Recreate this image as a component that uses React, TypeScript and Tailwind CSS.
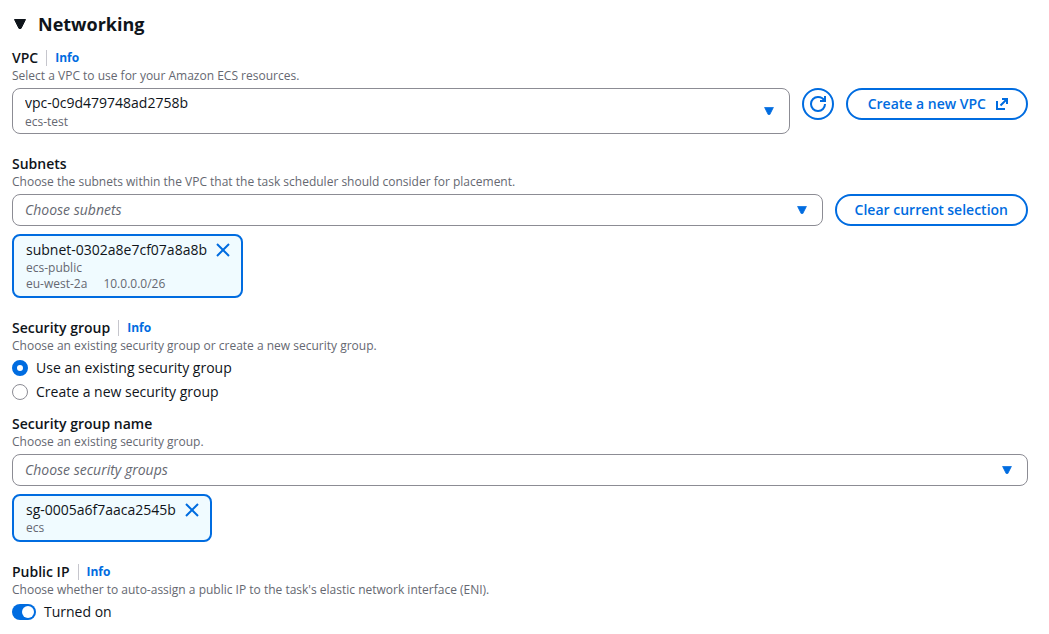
import React, { useState } from "react"

type FieldProps = {
  label: string
  htmlFor?: string
  description: string
  info?: boolean
  className?: string
  children: React.ReactNode
}

type DropdownProps = {
  id: string
  options: string[]
  detail?: string
  placeholder?: boolean
}

type TokenProps = {
  name: string
  details: string[][]
  onDismiss: () => void
}

function Caret({ className }: { className: string }) {
  return (
    <svg
      aria-hidden="true"
      viewBox="0 0 12 10"
      className={className}
      fill="currentColor"
      stroke="currentColor"
      strokeLinejoin="round"
    >
      <path d="M.5.5h11L7 9.500H5z" />
    </svg>
  )
}

function Field({
  label,
  htmlFor,
  description,
  info,
  className = "mt-5",
  children,
}: FieldProps) {
  const title = "text-[14px] leading-5 font-semibold"

  return (
    <div className={className}>
      <div className="flex items-center">
        {htmlFor ? (
          <label htmlFor={htmlFor} className={title}>
            {label}
          </label>
        ) : (
          <span className={title}>{label}</span>
        )}
        {info && (
          <a
            href="#info"
            className="ml-2 border-l border-[#c6c6cd] pl-2 text-[12px] leading-4 font-bold text-[#006ce0]"
          >
            Info
          </a>
        )}
      </div>
      <p className="mb-1 text-[12px] leading-4 text-[#656871]">{description}</p>
      {children}
    </div>
  )
}

function Dropdown({ id, options, detail, placeholder }: DropdownProps) {
  return (
    <div className="relative min-w-0 flex-1">
      <select
        id={id}
        className={`block w-full appearance-none rounded-lg border border-[#8c8c94] bg-white px-3 text-[14px] leading-5 ${
          detail ? "pt-1 pb-5" : "py-[5px]"
        } ${placeholder ? "text-[#656871] italic" : "text-[#0f141a]"}`}
      >
        {options.map((option) => (
          <option key={option}>{option}</option>
        ))}
      </select>
      {detail && (
        <span className="pointer-events-none absolute bottom-1 left-[13px] text-[12px] leading-4 text-[#656871]">
          {detail}
        </span>
      )}
      <span className="pointer-events-none absolute inset-y-0 right-4 flex items-center">
        <Caret className="h-2 w-[10px] text-[#006ce0]" />
      </span>
    </div>
  )
}

function Token({ name, details, onDismiss }: TokenProps) {
  return (
    <div className="mt-2 flex w-fit items-start gap-2 rounded-lg border-2 border-[#006ce0] bg-[#f0fbff] py-1 pr-[10px] pl-3">
      <div>
        <div className="text-[14px] leading-5">{name}</div>
        {details.map((row) => (
          <div
            key={row[0]}
            className="flex gap-4 text-[12px] leading-4 text-[#656871]"
          >
            {row.map((text) => (
              <span key={text}>{text}</span>
            ))}
          </div>
        ))}
      </div>
      <button
        type="button"
        aria-label={`Remove ${name}`}
        onClick={onDismiss}
        className="flex h-5 items-center text-[#006ce0]"
      >
        <svg
          viewBox="0 0 16 16"
          className="size-4"
          fill="none"
          stroke="currentColor"
          strokeWidth="2"
        >
          <path d="m2 2 12 12M14 2 2 14" />
        </svg>
      </button>
    </div>
  )
}

const buttonStyle =
  "flex h-8 shrink-0 items-center justify-center rounded-full border-2 border-[#006ce0] bg-white text-[14px] leading-5 font-semibold text-[#006ce0]"

export default function App(): React.JSX.Element {
  const [expanded, setExpanded] = useState(true)
  const [subnets, setSubnets] = useState(["subnet-0302a8e7cf07a8a8b"])
  const [groups, setGroups] = useState(["sg-0005a6f7aaca2545b"])
  const [mode, setMode] = useState("existing")
  const [publicIp, setPublicIp] = useState(true)

  return (
    <main className="bg-white py-3 pr-[21px] pl-3 font-['Open_Sans','Noto_Sans',sans-serif] text-[#0f141a]">
      <h2 className="text-[18px] leading-6 font-bold">
        <button
          type="button"
          aria-expanded={expanded}
          onClick={() => setExpanded(!expanded)}
          className="flex items-center gap-3 pl-[2px]"
        >
          <Caret
            className={expanded ? "h-[10px] w-3" : "h-[10px] w-3 -rotate-90"}
          />
          Networking
        </button>
      </h2>

      {expanded && (
        <>
          {/* VPC */}
          <Field
            label="VPC"
            htmlFor="vpc"
            info
            description="Select a VPC to use for your Amazon ECS resources."
            className="mt-3"
          >
            <div className="flex items-start gap-3">
              <Dropdown
                id="vpc"
                options={["vpc-0c9d479748ad2758b"]}
                detail="ecs-test"
              />
              <button
                type="button"
                aria-label="Refresh VPCs"
                className={`${buttonStyle} w-8`}
              >
                <svg
                  viewBox="0 0 16 16"
                  className="size-4"
                  fill="none"
                  stroke="currentColor"
                  strokeWidth="2"
                >
                  <path d="M10 5h5V0" />
                  <path d="M15 8a6.900 6.900 0 0 1-7 7 6.900 6.900 0 0 1-7-7 6.900 6.900 0 0 1 7-7c3 0 5.400 1.600 6.500 4" />
                </svg>
              </button>
              <button
                type="button"
                className={`${buttonStyle} gap-2 pr-4 pl-5`}
              >
                Create a new VPC
                <svg
                  aria-hidden="true"
                  viewBox="0 0 16 16"
                  className="size-4"
                  fill="none"
                  stroke="currentColor"
                  strokeWidth="2"
                >
                  <path d="M8 3h5v5M13 3 6.500 9.500M3 5v8h8" />
                </svg>
              </button>
            </div>
          </Field>

          {/* SUBNETS */}
          <Field
            label="Subnets"
            htmlFor="subnets"
            description="Choose the subnets within the VPC that the task scheduler should consider for placement."
          >
            <div className="flex items-start gap-3">
              <Dropdown id="subnets" options={["Choose subnets"]} placeholder />
              <button
                type="button"
                onClick={() => setSubnets([])}
                className={`${buttonStyle} px-[18px]`}
              >
                Clear current selection
              </button>
            </div>
            {subnets.map((name) => (
              <Token
                key={name}
                name={name}
                details={[["ecs-public"], ["eu-west-2a", "10.0.0.0/26"]]}
                onDismiss={() => setSubnets([])}
              />
            ))}
          </Field>

          {/* SECURITY GROUP */}
          <Field
            label="Security group"
            info
            description="Choose an existing security group or create a new security group."
          >
            <div className="flex flex-col gap-1 text-[14px] leading-5">
              {[
                ["existing", "Use an existing security group"],
                ["new", "Create a new security group"],
              ].map(([value, text]) => (
                <label key={value} className="flex items-center gap-2">
                  <input
                    type="radio"
                    name="security-group"
                    value={value}
                    checked={mode === value}
                    onChange={() => setMode(value)}
                    className="size-4 appearance-none rounded-full border border-[#8c8c94] bg-white checked:border-5 checked:border-[#006ce0]"
                  />
                  {text}
                </label>
              ))}
            </div>
          </Field>

          <Field
            label="Security group name"
            htmlFor="groups"
            description="Choose an existing security group."
            className="mt-3"
          >
            <div className="flex">
              <Dropdown
                id="groups"
                options={["Choose security groups"]}
                placeholder
              />
            </div>
            {groups.map((name) => (
              <Token
                key={name}
                name={name}
                details={[["ecs"]]}
                onDismiss={() => setGroups([])}
              />
            ))}
          </Field>

          {/* PUBLIC IP */}
          <Field
            label="Public IP"
            info
            description="Choose whether to auto-assign a public IP to the task's elastic network interface (ENI)."
          >
            <label className="flex w-fit items-center gap-2 text-[14px] leading-5">
              <span className="relative flex">
                <input
                  type="checkbox"
                  role="switch"
                  checked={publicIp}
                  onChange={() => setPublicIp(!publicIp)}
                  className="peer h-4 w-6 appearance-none rounded-full bg-[#8c8c94] checked:bg-[#006ce0]"
                />
                <span className="pointer-events-none absolute top-[2px] left-[2px] size-3 rounded-full bg-white peer-checked:left-[10px]" />
              </span>
              {publicIp ? "Turned on" : "Turned off"}
            </label>
          </Field>
        </>
      )}
    </main>
  )
}
